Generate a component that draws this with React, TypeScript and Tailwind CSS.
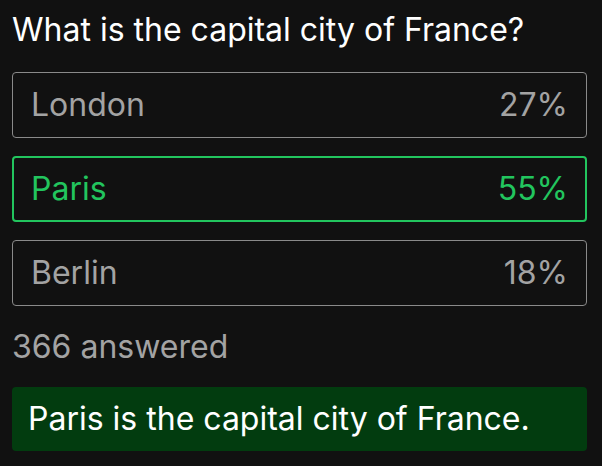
const options = [
  { label: 'London', pct: 27, correct: false },
  { label: 'Paris', pct: 55, correct: true },
  { label: 'Berlin', pct: 18, correct: false },
];

export default function App() {
  return (
    <div
      className="w-[602px] h-[466px] bg-[#111111] pl-3 pr-[15px] pt-[6px]"
      style={{ fontFamily: 'Inter, "Noto Sans", sans-serif' }}
    >
      <h1 className="text-[32px] leading-[48px] text-white">
        What is the capital city of France?
      </h1>

      <div className="mt-[18px] flex flex-col gap-[18px]">
        {options.map((o) => (
          <div
            key={o.label}
            className={`h-[66px] flex items-center justify-between rounded text-[32px] ${
              o.correct
                ? 'border-2 px-[17px] border-[#22c55e] text-[#22c55e]'
                : 'border px-[18px] border-[#8a8a8a] text-[#a3a3a3]'
            }`}
          >
            <span>{o.label}</span>
            <span>{o.pct}%</span>
          </div>
        ))}
      </div>

      <p className="mt-[17px] text-[32px] leading-[48px] text-[#a3a3a3]">
        366 answered
      </p>

      <div className="mt-[16px] h-[64px] flex items-center px-4 rounded bg-[#023c0f] text-[32px] text-white">
        Paris is the capital city of France.
      </div>
    </div>
  );
}
